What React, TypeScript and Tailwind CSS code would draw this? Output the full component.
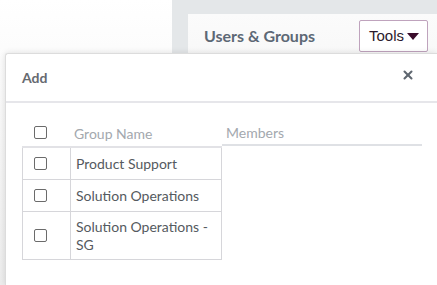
import { X } from "lucide-react";

const rows = [
  { name: "Product Support", tall: false },
  { name: "Solution Operations", tall: false },
  { name: "Solution Operations - SG", tall: true },
];

function Box() {
  return <span className="block w-[13px] h-[13px] rounded-[2px] border border-[#6b6b6b] bg-white" />;
}

export default function App() {
  return (
    <div className="relative w-[437px] h-[285px] overflow-hidden font-['Lato',sans-serif]">
      <div className="flex h-full">
        <div className="w-[172px] h-full bg-gradient-to-b from-white to-[#ededed]" />
        <div className="flex-1 h-full bg-[#e4e7e9] pt-[14px] pl-[16px]">
          <div className="h-full bg-gradient-to-b from-[#fbfbfb] to-[#e9e9e9] flex items-start justify-between pl-[16px] pr-[9px] pt-[6px]">
            <span className="mt-[4px] text-[16px] font-bold text-[#5d6875]">Users &amp; Groups</span>
            <button className="h-[32px] pl-[9px] pr-[8px] border border-[#bfa3bd] rounded-[2px] bg-white flex items-center gap-[3px] text-[15px] text-[#2a1a2c] font-['Liberation_Sans',sans-serif]">
              Tools
              <svg width="12" height="7" viewBox="0 0 12 7"><path d="M0 0h12L6 7z" fill="#3a0c2b" /></svg>
            </button>
          </div>
        </div>
      </div>

      <div className="absolute left-[5px] top-[53px] right-0 bottom-0 bg-white rounded-tl-[3px] border-l border-t border-[#dcdcdc] shadow-[0_0_6px_rgba(0,0,0,0.12)]">
        <div className="h-[49px] flex items-center justify-between pl-[16px] pr-[22px] border-b-2 border-[#e6e6ea]">
          <span className="text-[14px] font-bold text-[#666a70]">Add</span>
          <X size={14} strokeWidth={3.5} className="text-[#5f6770] -mt-[6px]" />
        </div>

        <div className="pl-[16px] pt-[21px] flex">
          <div className="w-[200px]">
            <div className="flex h-[24px] border-b-2 border-[#e2e2e6]">
              <div className="w-[49px] shrink-0 pl-[12px] pt-[2px]"><Box /></div>
              <span className="pl-[3px] pt-[1px] text-[14px] leading-[18px] text-[#a3a8ae]">Group Name</span>
            </div>
            <div className="border border-t-0 border-[#d6d6da]">
              {rows.map((r, i) => (
                <div key={r.name} className={`flex ${r.tall ? "h-[47px]" : "h-[32px]"} ${i < rows.length - 1 ? "border-b border-[#d6d6da]" : ""}`}>
                  <div className="w-[48px] shrink-0 flex items-center pl-[11px] border-r border-[#d6d6da]"><Box /></div>
                  <span className="flex items-center pl-[5px] pr-[4px] text-[14px] leading-[18px] text-[#555a60]">{r.name}</span>
                </div>
              ))}
            </div>
          </div>
          <div className="w-[200px] h-[22px] border-b-2 border-[#dfe1e5]">
            <span className="block pl-[4px] text-[14px] leading-[18px] text-[#a3a8ae]">Members</span>
          </div>
        </div>
      </div>
    </div>
  );
}
